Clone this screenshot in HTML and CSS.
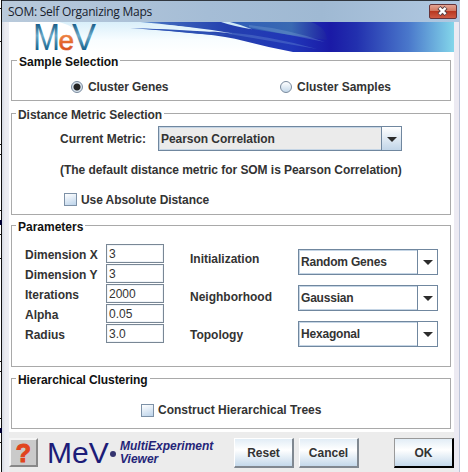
FILE: index.html
```html
<!DOCTYPE html>
<html lang="en">
<head>
<meta charset="utf-8">
<title>SOM: Self Organizing Maps</title>
<link rel="stylesheet" href="styles.css">
</head>
<body>
<div class="desktop">
<div class="edge"></div>
<div class="window">
  <header class="titlebar"><span class="title">SOM: Self Organizing Maps</span>
    <button class="close" aria-label="Close"><svg width="26" height="14" viewBox="0 0 26 14"><path d="M9 3.5 16 10.5M16 3.5 9 10.5" stroke="#594044" stroke-width="4.4"/><path d="M9.4 3.9 15.6 10.1M15.6 3.9 9.4 10.1" stroke="#fff" stroke-width="2.4"/></svg></button>
  </header>
  <div class="frame">
    <main class="content">
      <div class="banner">
        <svg class="swoosh" width="445" height="30" viewBox="0 0 445 30">
          <defs>
            <linearGradient id="sky" x2="0" y2="1"><stop offset="0" stop-color="#d9effa"/><stop offset=".6" stop-color="#f8fdff"/><stop offset="1" stop-color="#fff"/></linearGradient>
            <linearGradient id="deep" gradientUnits="userSpaceOnUse" x1="121" x2="445" y1="0" y2="0"><stop offset="0" stop-color="#7fb4df"/><stop offset=".1" stop-color="#3f68bd"/><stop offset=".3" stop-color="#2440ae"/><stop offset=".5" stop-color="#2036b8"/><stop offset=".62" stop-color="#1a1aa6"/><stop offset=".7" stop-color="#2230ae"/><stop offset=".86" stop-color="#4a78cb"/><stop offset="1" stop-color="#83d6ea"/></linearGradient>
            <linearGradient id="sheen"><stop offset="0" stop-color="#2f5cb8"/><stop offset=".65" stop-color="#3a6ab2"/><stop offset="1" stop-color="#1d20a3"/></linearGradient>
          </defs>
          <path d="M50 0H300V30H50Q90 12 50 0Z" fill="url(#sky)"/>
          <path d="M131 0H445V30H284Q258 25 234 18.7Q205 11 121 6Q160 7 206 10Q170 3 131 0Z" fill="url(#deep)"/>
          <path d="M150 6Q190 8 224 11.5Q184 4 140 2Z" fill="#e3f3fb"/>
          <path d="M121 6Q180 8 226 13.5Q190 12.5 160 9Z" fill="#2c50b4"/>
          <path d="M216 0H302Q318 6 318 18Q285 14 244 7Z" fill="url(#sheen)"/>
          <path d="M212 0H221Q233 3 243 7.2Q225 4.5 212 0Z" fill="#cfe8f6"/>
          <path d="M240 3Q280 7 316 20Q280 13 240 5Z" fill="#7aa2d4" opacity=".35"/>
          <path d="M216 10Q262 14 308 27Q262 19 220 12Z" fill="#6f94d8" opacity=".35"/>
        </svg>
        <svg class="wordmark" width="74" height="30" viewBox="0 0 74 30" overflow="visible">
          <defs>
            <linearGradient id="steel" gradientUnits="userSpaceOnUse" x1="0" x2="0" y1="2" y2="28"><stop offset="0" stop-color="#1b5d88"/><stop offset=".45" stop-color="#6aa9c8"/><stop offset="1" stop-color="#15628d"/></linearGradient>
            <linearGradient id="ember" gradientUnits="userSpaceOnUse" x1="0" x2="0" y1="11" y2="28"><stop offset="0" stop-color="#f08a48"/><stop offset="1" stop-color="#d94d1c"/></linearGradient>
          </defs>
          <text y="27.5" font-size="36"><tspan x="3" fill="url(#steel)" textLength="27" lengthAdjust="spacingAndGlyphs">M</tspan><tspan x="28.5" fill="url(#ember)" stroke="url(#ember)" stroke-width=".6" font-size="28">e</tspan><tspan x="42" fill="url(#steel)">V</tspan></text>
        </svg>
      </div>

      <section class="panel sample">
        <h2><span>Sample Selection</span></h2>
        <div class="radios">
          <label class="radio genes"><i class="dot on"></i><span>Cluster Genes</span></label>
          <label class="radio"><i class="dot"></i><span>Cluster Samples</span></label>
        </div>
      </section>

      <section class="panel metric">
        <h2 class="gray"><span>Distance Metric Selection</span></h2>
        <div class="metric-row"><span class="metric-label">Current Metric:</span>
          <div class="combo wide"><span>Pearson Correlation</span><i class="arrow"></i></div></div>
        <p class="note">(The default distance metric for SOM is Pearson Correlation)</p>
        <label class="check absolute-distance"><i class="box"></i><span>Use Absolute Distance</span></label>
      </section>

      <section class="panel params">
        <h2><span>Parameters</span></h2>
        <div class="param-columns">
          <div class="fields">
            <span>Dimension X</span><b class="input">3</b>
            <span>Dimension Y</span><b class="input">3</b>
            <span>Iterations</span><b class="input">2000</b>
            <span>Alpha</span><b class="input">0.05</b>
            <span>Radius</span><b class="input">3.0</b>
          </div>
          <div class="choice-labels">
            <span>Initialization</span>
            <span>Neighborhood</span>
            <span>Topology</span>
          </div>
          <div class="choices">
            <div class="combo"><span>Random Genes</span><i class="arrow"></i></div>
            <div class="combo"><span>Gaussian</span><i class="arrow"></i></div>
            <div class="combo"><span>Hexagonal</span><i class="arrow"></i></div>
          </div>
        </div>
      </section>

      <section class="panel hier">
        <h2><span>Hierarchical Clustering</span></h2>
        <label class="check trees"><i class="box"></i><span>Construct Hierarchical Trees</span></label>
      </section>

      <footer class="footer">
        <button class="help" aria-label="Help">?</button>
        <span class="mev">MeV</span><i class="bullet"></i>
        <span class="tagline">MultiExperiment<br>Viewer</span>
        <button class="btn reset">Reset</button>
        <button class="btn cancel">Cancel</button>
        <button class="btn ok">OK</button>
      </footer>
    </main>
  </div>
</div>
</div>
</body>
</html>
```
FILE: styles.css
```css
* { box-sizing: border-box; }
body { margin: 0; background: #fff; color: #333; font: bold 12px/14px "Liberation Sans", Arial, sans-serif; overflow: hidden; }
button { font: inherit; padding: 0; margin: 0; color: #333; }
i, b { font-style: normal; font-weight: normal; }
span, p { white-space: nowrap; }
.desktop { display: flex; width: 468px; height: 472px; }
.edge { width: 2px; flex: none; background:
  linear-gradient(#111, #111) 0 8px / 2px 1px no-repeat,
  linear-gradient(#111, #111) 0 41px / 2px 1px no-repeat,
  linear-gradient(#111, #111) 0 144px / 2px 1px no-repeat,
  linear-gradient(#111, #111) 0 154px / 2px 1px no-repeat,
  linear-gradient(#111, #111) 0 210px / 2px 1px no-repeat,
  linear-gradient(#003, #003) 0 220px / 2px 5px no-repeat,
  linear-gradient(#111, #111) 0 234px / 2px 1px no-repeat,
  linear-gradient(#111, #111) 0 258px / 2px 1px no-repeat,
  linear-gradient(#111, #111) 0 361px / 2px 1px no-repeat,
  linear-gradient(#111, #111) 0 371px / 2px 1px no-repeat,
  linear-gradient(#111, #111) 0 418px / 2px 1px no-repeat,
  linear-gradient(#003, #003) 0 428px / 2px 5px no-repeat,
  linear-gradient(#111, #111) 0 442px / 2px 1px no-repeat,
  linear-gradient(90deg, #fff 1px, #111 1px); }
.window { width: 458px; height: 472px; border-top: 1px solid #30363e; border-right: 1px solid #bcc4d8; }
.titlebar { display: flex; justify-content: space-between; height: 21px; padding: 3px 2px 0 6px; background: linear-gradient(90deg, #b9cadb, #a5bdd6 45%, #9fb9d3 70%, #b0c8e1); }
.title { font: 12px/16px "Open Sans", "Noto Sans", sans-serif; color: #16202c; letter-spacing: -.26px; }
.close { width: 28px; height: 15px; border: 1px solid #66343a; border-radius: 2px; background: linear-gradient(#e3a493, #d27860 45%, #b93820 50%, #cf5b44); line-height: 0; }
.close svg { display: block; margin-top: -1px; }
.frame { height: 450px; padding: 0 5px 0 7px; background: linear-gradient(90deg, #d5dbe5 0, #ebebf0 3px, #eceef4 7px, #eceaf2 8px); }
.content { display: flex; flex-direction: column; height: 450px; background: #fff; }
.banner { position: relative; height: 30px; flex: none; }
.swoosh { display: block; }
.wordmark { position: absolute; left: 21px; top: 0; font-family: "Liberation Sans", sans-serif; font-weight: normal; }
.panel { flex: none; margin: 0 3px 0 2px; border: 1px solid #a9a9a9; }
.panel h2 { margin: -6px 0 0 5px; height: 14px; font: inherit; color: #111; }
.panel h2 span { background: #fff; padding: 0 2px; }
.panel h2.gray { color: #333; letter-spacing: -.05px; }
.metric h2, .params h2, .hier h2 { margin-left: 4px; }
.sample { margin-top: 8px; height: 41px; }
.metric { margin-top: 12px; height: 102px; }
.params { margin-top: 10px; height: 142px; }
.hier { margin-top: 11px; height: 51px; }
.hier h2 { letter-spacing: -.08px; }
.radios { display: flex; padding: 11px 0 0 59px; }
.radio, .check { display: flex; align-items: center; height: 14px; }
.dot { width: 12px; height: 12px; border: 1px solid #78899d; border-radius: 50%; background: linear-gradient(#fff, #c4d8ea); margin-right: 5px; }
.dot.on { background: radial-gradient(circle, #262626 3px, #d9e4ee 4px); }
.genes { width: 209px; }
.genes span { letter-spacing: -.08px; }
.metric-row { display: flex; align-items: center; padding: 4px 0 0 48px; }
.metric-label { width: 98px; }
.combo { display: flex; align-items: center; width: 140px; height: 26px; border: 1px solid #70879f; background: #fff; box-shadow: inset 0 0 0 1px #c5d5e5; }
.combo > span { flex: 1; padding-left: 2px; letter-spacing: -.2px; }
.combo .arrow { width: 20px; height: 24px; border-left: 1px solid #70879f; background: #fff; display: flex; justify-content: center; align-items: center; }
.arrow::before { content: ""; border: 5px solid transparent; border-top: 5px solid #2c2c2c; border-bottom: 0; margin-top: 1px; }
.combo.wide { width: 244px; height: 25px; background: #ebebeb; }
.combo.wide > span { letter-spacing: -.05px; }
.wide .arrow { height: 23px; background: linear-gradient(#fff, #c1d5e8); }
.note { margin: 12px 0 0 48px; letter-spacing: -.05px; }
.box { width: 13px; height: 13px; border: 1px solid #7d91a7; background: linear-gradient(160deg, #fff, #bcd3ea); margin-right: 4px; }
.absolute-distance { margin: 15px 0 0 52px; letter-spacing: -.07px; }
.absolute-distance span { padding-top: 1px; }
.param-columns { display: flex; padding: 10px 0 0 13px; }
.fields { display: grid; grid-template-columns: 81px 58px; grid-template-rows: repeat(5, 20px); width: 165px; align-items: center; }
.fields > span { padding-top: 1px; }
.input { height: 19px; border: 1px solid #798795; background: #fff; padding: 1px 2px; line-height: 17px; box-shadow: inset 0 0 0 1px #f0f4f8; align-self: start; }
.choice-labels { display: flex; flex-direction: column; gap: 24px; width: 108px; padding-top: 8px; }
.choices { display: flex; flex-direction: column; gap: 10px; padding-top: 5px; }
.trees { margin: 16px 0 0 129px; }
.footer { display: flex; height: 41px; margin-top: 3px; background: #ececec; padding: 6px 0 0; flex: none; }
.help { width: 29px; height: 29px; border: 2px solid #f5f5f5; border-right-color: #888; border-bottom-color: #888; background: #cacaca; color: #e1441e; font: bold 25px/24px "Liberation Sans", sans-serif; -webkit-text-stroke: 1px #e1441e; }
.mev { width: 62px; margin-left: 9px; font: 30px/30px "Liberation Sans", sans-serif; color: #1c1c78; }
.bullet { width: 6px; height: 6px; border-radius: 50%; background: #34346f; margin: 13px 0 0 1px; }
.tagline { width: 113px; margin-left: 4px; padding-top: 2px; font-style: italic; line-height: 13px; color: #252578; }
.btn { height: 30px; border: 1px solid #fff; border-right: 2px solid #808890; border-bottom: 2px solid #808890; background: linear-gradient(#e2edf6, #fff 40%, #c4d9eb); }
.reset { width: 60px; margin-left: 1px; }
.cancel { width: 60px; margin-left: 5px; }
.ok { width: 60px; margin-left: 35px; border-color: #999 #000 #000 #999; }
```
